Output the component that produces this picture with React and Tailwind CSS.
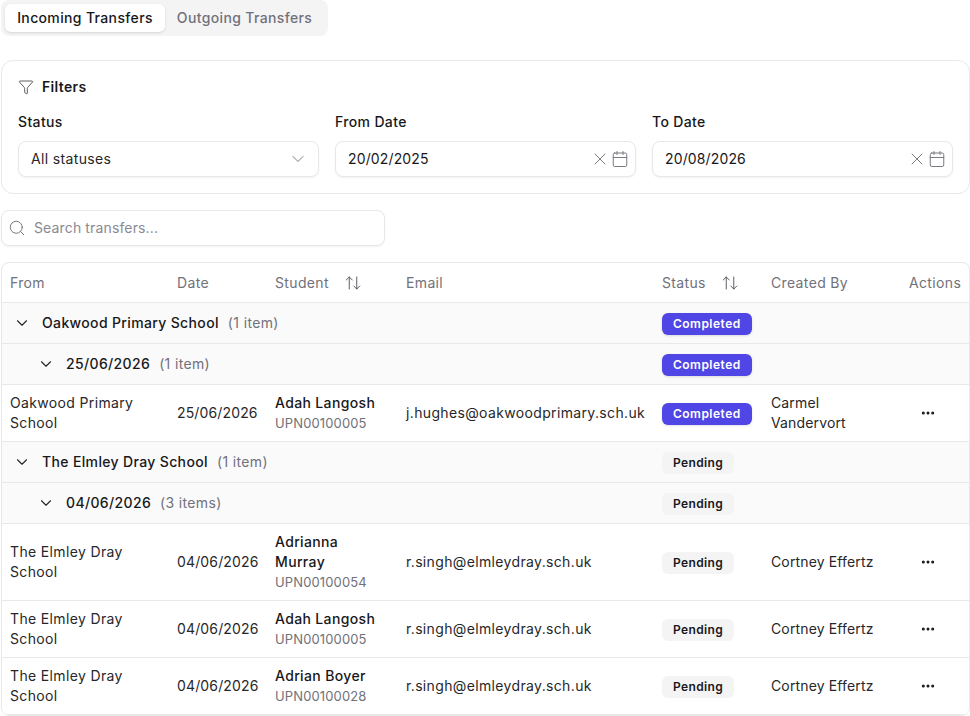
import { ArrowUpDown, Calendar, ChevronDown, Ellipsis, Funnel, Search, X } from "lucide-react";

const Badge = ({ status }) => {
  if (status === "Completed") {
    return (
      <span className="inline-flex h-[22px] items-center rounded-md bg-[#4f46e5] px-[11px] text-xs font-semibold tracking-[0.04em] text-white shadow-sm">
        Completed
      </span>
    );
  }
  return (
    <span className="inline-flex h-[22px] items-center rounded-md bg-[#f4f4f5] px-[11px] text-xs font-semibold tracking-[0.03em] text-[#18181b]">
      Pending
    </span>
  );
};

const DateField = ({ label, value }) => (
  <div className="flex-1">
    <div className="mb-[9px] h-5 text-sm leading-5 font-medium text-[#18181b]">{label}</div>
    <div className="flex h-9 items-center rounded-lg border border-[#e8e8ea] bg-white pr-[6px] pl-3 shadow-xs">
      <span className="flex-1 text-sm tracking-[0.01em] text-[#18181b]">{value}</span>
      <X className="mr-px h-5 w-5 text-[#71717a]" strokeWidth={1.1} />
      <Calendar className="h-[18px] w-[18px] text-[#71717a]" strokeWidth={1.25} />
    </div>
  </div>
);

const GroupRow = ({ level, title, count, status }) => (
  <tr className="h-[41px] border-b border-[#e9e9eb] bg-[#fafafa]">
    <td colSpan={4} className="p-0">
      <div className={level === 0 ? "flex items-center pl-[11px]" : "flex items-center pl-[35px]"}>
        <ChevronDown className="mr-[11px] h-[18px] w-[18px] text-[#27272a]" strokeWidth={1.5} />
        <span className="text-sm font-medium text-[#18181b]">{title}</span>
        <span className="ml-[9px] text-sm text-[#71717a]">({count})</span>
      </div>
    </td>
    <td className="px-2 py-0"><Badge status={status} /></td>
    <td colSpan={2} />
  </tr>
);

const DataRow = ({ from, date, name, upn, email, status, by, tall }) => (
  <tr className={tall ? "h-[77px] border-b border-[#e9e9eb] bg-white" : "h-[57px] border-b border-[#e9e9eb] bg-white"}>
    <td className="px-2 py-0 text-sm leading-5 text-[#27272a]">{from}</td>
    <td className="px-2 py-0 text-sm leading-5 tracking-[0.01em] text-[#27272a]">{date}</td>
    <td className="px-2 py-0 leading-5">
      <div className="max-w-[112px] text-sm font-medium text-[#18181b]">{name}</div>
      <div className="text-[13px] tracking-[0.01em] text-[#71717a]">{upn}</div>
    </td>
    <td className="px-2 py-0 text-sm leading-5 text-[#27272a]">{email}</td>
    <td className="px-2 py-0"><Badge status={status} /></td>
    <td className="px-2 py-0 text-sm leading-5 tracking-[0.01em] text-[#27272a]">{by}</td>
    <td className="px-2 py-0">
      <div className="flex justify-center pr-[14px]">
        <Ellipsis className="h-4 w-4 text-[#18181b]" strokeWidth={2.5} />
      </div>
    </td>
  </tr>
);

const Head = ({ children, sort }) => (
  <th className="px-2 pt-[2px] pb-0 text-left text-sm font-normal text-[#71717a]">
    <div className="flex items-center">
      {children}
      {sort && <ArrowUpDown className="ml-[15px] h-[18px] w-[18px] text-[#52525b]" strokeWidth={1.25} />}
    </div>
  </th>
);

export default function App() {
  return (
    <div className="h-[716px] w-[970px] overflow-hidden bg-white pl-px font-['Inter',sans-serif] tracking-[0.022em]">
      {/* Tabs */}
      <div className="flex h-9 w-[327px] items-center rounded-lg bg-[#f4f4f5] p-1">
        <div className="flex h-7 w-[160px] items-center justify-center rounded-md bg-white text-sm font-medium text-[#18181b] shadow-sm">
          Incoming Transfers
        </div>
        <div className="flex h-7 flex-1 items-center justify-center text-sm font-medium text-[#71717a]">
          Outgoing Transfers
        </div>
      </div>

      {/* Filters */}
      <div className="mt-6 h-[134px] rounded-xl border border-[#e8e8ea] bg-white px-4 pt-4">
        <div className="flex h-5 items-center gap-2">
          <Funnel className="h-[16px] w-[16px] text-[#3f3f46]" strokeWidth={1.25} />
          <span className="text-sm font-semibold text-[#18181b]">Filters</span>
        </div>
        <div className="mt-[15px] flex gap-4">
          <div className="flex-1">
            <div className="mb-[9px] h-5 text-sm leading-5 font-medium text-[#18181b]">Status</div>
            <div className="flex h-9 items-center justify-between rounded-lg border border-[#e8e8ea] bg-white pr-[10px] pl-3 shadow-xs">
              <span className="text-sm text-[#27272a]">All statuses</span>
              <ChevronDown className="h-5 w-5 text-[#71717a]" strokeWidth={1.1} />
            </div>
          </div>
          <DateField label="From Date" value="20/02/2025" />
          <DateField label="To Date" value="20/08/2026" />
        </div>
      </div>

      {/* Search */}
      <div className="mt-4 flex h-9 w-[384px] items-center rounded-lg border border-[#e8e8ea] bg-white pl-[6px] shadow-xs">
        <Search className="h-[18px] w-[18px] text-[#71717a]" strokeWidth={1.25} />
        <span className="ml-2 text-sm tracking-[0.01em] text-[#8a8a92]">Search transfers...</span>
      </div>

      {/* Table */}
      <div className="mt-4 overflow-hidden rounded-lg border border-[#e8e8ea]">
        <table className="w-full table-fixed border-collapse">
          <colgroup>
            <col className="w-[167px]" />
            <col className="w-[98px]" />
            <col className="w-[131px]" />
            <col className="w-[256px]" />
            <col className="w-[109px]" />
            <col className="w-[138px]" />
            <col />
          </colgroup>
          <thead>
            <tr className="h-[39px] border-b border-[#e9e9eb]">
              <Head>From</Head>
              <Head>Date</Head>
              <Head sort>Student</Head>
              <Head>Email</Head>
              <Head sort>Status</Head>
              <Head>Created By</Head>
              <Head>Actions</Head>
            </tr>
          </thead>
          <tbody>
            <GroupRow level={0} title="Oakwood Primary School" count="1 item" status="Completed" />
            <GroupRow level={1} title="25/06/2026" count="1 item" status="Completed" />
            <DataRow from="Oakwood Primary School" date="25/06/2026" name="Adah Langosh" upn="UPN00100005" email="j.hughes@oakwoodprimary.sch.uk" status="Completed" by="Carmel Vandervort" />
            <GroupRow level={0} title="The Elmley Dray School" count="1 item" status="Pending" />
            <GroupRow level={1} title="04/06/2026" count="3 items" status="Pending" />
            <DataRow tall from="The Elmley Dray School" date="04/06/2026" name="Adrianna Murray" upn="UPN00100054" email="r.singh@elmleydray.sch.uk" status="Pending" by="Cortney Effertz" />
            <DataRow from="The Elmley Dray School" date="04/06/2026" name="Adah Langosh" upn="UPN00100005" email="r.singh@elmleydray.sch.uk" status="Pending" by="Cortney Effertz" />
            <DataRow from="The Elmley Dray School" date="04/06/2026" name="Adrian Boyer" upn="UPN00100028" email="r.singh@elmleydray.sch.uk" status="Pending" by="Cortney Effertz" />
          </tbody>
        </table>
      </div>
    </div>
  );
}
